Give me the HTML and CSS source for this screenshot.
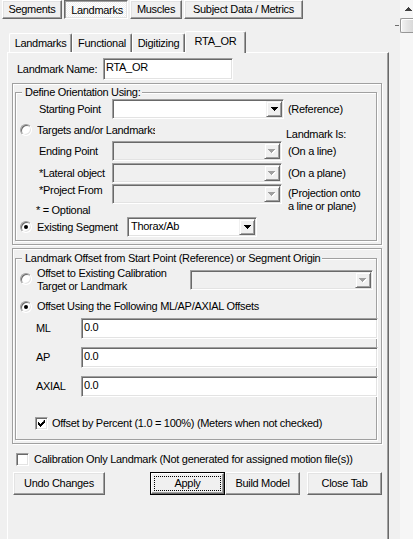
FILE: index.html
```html
<!DOCTYPE html>
<html>
<head>
<meta charset="utf-8">
<title>Landmarks</title>
<link rel="stylesheet" href="styles.css">
</head>
<body>
<div class="window">
  <div class="main">
    <div class="toptabs">
      <div class="tbtn w-seg">Segments</div>
      <div class="tbtn pressed w-lm">Landmarks</div>
      <div class="tbtn w-mus">Muscles</div>
      <div class="tbtn w-subj">Subject Data / Metrics</div>
    </div>
    <div class="subtabs">
      <div class="tab t1">Landmarks</div>
      <div class="tab t2">Functional</div>
      <div class="tab t3">Digitizing</div>
      <div class="tab sel t4">RTA_OR</div>
    </div>
    <div class="panel">
      <div class="namerow">
        <span class="namelbl">Landmark Name:</span>
        <div class="edit namebox">RTA_OR</div>
      </div>

      <div class="frame f1">
        <div class="group g1">
          <div class="legend">Define Orientation Using:</div>
          <div class="row r-lbl r-start">
            <span class="lbl">Starting Point</span>
            <div class="combo w172"><div class="field"></div><div class="dbtn"><svg width="7" height="4" viewBox="0 0 7 4"><path d="M0 0h7v1h-1v1h-1v1h-1v1h-1v-1h-1v-1h-1v-1h-1z" fill="#000"/></svg></div></div>
            <span class="note n4">(Reference)</span>
          </div>
          <div class="row r-targets">
            <div class="radio"></div>
            <span class="rtext clip">Targets and/or Landmarks</span>
            <span class="landis">Landmark Is:</span>
          </div>
          <div class="row r-lbl r-end">
            <span class="lbl">Ending Point</span>
            <div class="combo dis w170"><div class="field"></div><div class="dbtn"><svg width="8" height="5" viewBox="0 0 8 5"><path d="M1 1h7v1h-1v1h-1v1h-1v1h-1v-1h-1v-1h-1v-1h-1z" fill="#fff"/><path d="M0 0h7v1h-1v1h-1v1h-1v1h-1v-1h-1v-1h-1v-1h-1z" fill="#a0a0a0"/></svg></div></div>
            <span class="note n6">(On a line)</span>
          </div>
          <div class="row r-lbl r-lat">
            <span class="lbl">*Lateral object</span>
            <div class="combo dis w170"><div class="field"></div><div class="dbtn"><svg width="8" height="5" viewBox="0 0 8 5"><path d="M1 1h7v1h-1v1h-1v1h-1v1h-1v-1h-1v-1h-1v-1h-1z" fill="#fff"/><path d="M0 0h7v1h-1v1h-1v1h-1v1h-1v-1h-1v-1h-1v-1h-1z" fill="#a0a0a0"/></svg></div></div>
            <span class="note n6">(On a plane)</span>
          </div>
          <div class="row r-lbl r-proj">
            <span class="lbl">*Project From</span>
            <div class="combo dis w170"><div class="field"></div><div class="dbtn"><svg width="8" height="5" viewBox="0 0 8 5"><path d="M1 1h7v1h-1v1h-1v1h-1v1h-1v-1h-1v-1h-1v-1h-1z" fill="#fff"/><path d="M0 0h7v1h-1v1h-1v1h-1v1h-1v-1h-1v-1h-1v-1h-1z" fill="#a0a0a0"/></svg></div></div>
            <span class="note n6 twoline">(Projection onto<br>a line or plane)</span>
          </div>
          <div class="row r-opt">* = Optional</div>
          <div class="row r-seg">
            <div class="radio on"></div>
            <span class="rtext segtext">Existing Segment</span>
            <div class="combo w130"><div class="field">Thorax/Ab</div><div class="dbtn"><svg width="7" height="4" viewBox="0 0 7 4"><path d="M0 0h7v1h-1v1h-1v1h-1v1h-1v-1h-1v-1h-1v-1h-1z" fill="#000"/></svg></div></div>
          </div>
        </div>
      </div>

      <div class="frame f2">
        <div class="group g2">
          <div class="legend">Landmark Offset from Start Point (Reference) or Segment Origin</div>
          <div class="row r-cal">
            <div class="radio"></div>
            <span class="rtext caltext">Offset to Existing Calibration<br>Target or Landmark</span>
            <div class="combo dis w183"><div class="field"></div><div class="dbtn"><svg width="8" height="5" viewBox="0 0 8 5"><path d="M1 1h7v1h-1v1h-1v1h-1v1h-1v-1h-1v-1h-1v-1h-1z" fill="#fff"/><path d="M0 0h7v1h-1v1h-1v1h-1v1h-1v-1h-1v-1h-1v-1h-1z" fill="#a0a0a0"/></svg></div></div>
          </div>
          <div class="row r-use">
            <div class="radio on"></div>
            <span class="rtext">Offset Using the Following ML/AP/AXIAL Offsets</span>
          </div>
          <div class="row r-off r-ml">
            <span class="olbl">ML</span>
            <div class="edit oedit">0.0</div>
          </div>
          <div class="row r-off r-ap">
            <span class="olbl">AP</span>
            <div class="edit oedit">0.0</div>
          </div>
          <div class="row r-off r-ax">
            <span class="olbl">AXIAL</span>
            <div class="edit oedit">0.0</div>
          </div>
          <div class="row r-pct">
            <div class="check"><svg width="7" height="7" viewBox="0 0 7 7"><path d="M6 0h1v3h-1v1h-1v1h-1v1h-1v1h-1v-1h-1v-1h-1v-3h1v1h1v1h1v-1h1v-1h1z" fill="#000"/></svg></div>
            <span class="ctext">Offset by Percent (1.0 = 100%) (Meters when not checked)</span>
          </div>
        </div>
      </div>

      <div class="row r-calib">
        <div class="check"></div>
        <span class="ctext c5">Calibration Only Landmark (Not generated for assigned motion file(s))</span>
      </div>

      <div class="btns">
        <div class="btn b-undo">Undo Changes</div>
        <div class="btn def b-apply"><div class="face"><div class="focus">Apply</div></div></div>
        <div class="btn b-build">Build Model</div>
        <div class="btn b-close">Close Tab</div>
      </div>
    </div>
  </div>
  <div class="mark"><i></i></div>
  <div class="scroll">
    <div class="sb-up"><svg width="7" height="4" viewBox="0 0 7 4"><path d="M3 0h1v1h1v1h1v1h1v1h-7v-1h1v-1h1v-1h1z" fill="#404040"/></svg></div>
    <div class="thumb"></div>
  </div>
</div>
</body>
</html>
```
FILE: styles.css
```css
* { box-sizing: border-box; }
html, body { margin: 0; padding: 0; }
body {
  background: #f0f0f0;
  font-family: "Liberation Sans", Arial, sans-serif;
  font-size: 11px;
  line-height: 13px;
  letter-spacing: -0.3px;
  color: #000;
  width: 413px;
  height: 539px;
  overflow: hidden;
}
.window { display: flex; height: 539px; }
.main { width: 395px; flex: none; }
.mark { width: 5px; flex: none; padding-top: 25px; }
.mark i { display: block; width: 4px; height: 1px; background: #6d6d6d; }
.scroll { width: 13px; flex: none; background: #f6f6f6; }
.sb-up { height: 18px; display: flex; padding: 7px 0 0 5px; }
.sb-up svg { display: block; }
.thumb {
  height: 15px; width: 14px;
  border: 1px solid #979797; border-right: none;
  border-radius: 2px 0 0 2px;
  background: linear-gradient(to right, #f3f3f3, #e4e4e4 50%, #d8d8d8);
  box-shadow: inset 1px 1px 0 #fff;
}

/* top tab buttons */
.toptabs { display: flex; gap: 2px; padding-left: 2px; height: 19px; }
.tbtn {
  height: 19px; display: flex; align-items: center; justify-content: center;
  border: 1px solid; border-color: #fff #696969 #696969 #fff;
  box-shadow: inset -1px -1px 0 #a0a0a0, inset 1px 1px 0 #e3e3e3;
  white-space: nowrap;
}
.tbtn.pressed {
  border-color: #696969 #fff #fff #696969;
  box-shadow: inset 1px 1px 0 #a0a0a0, inset -1px -1px 0 #e3e3e3;
  background: repeating-conic-gradient(#fff 0 25%, #f0f0f0 0 50%) 0 0 / 2px 2px;
  padding: 2px 0 0 2px;
}
.w-seg { width: 60px; }
.w-lm { width: 64px; }
.w-mus { width: 52px; }
.w-subj { width: 119px; }

/* sub tabs */
.subtabs {
  display: flex; align-items: flex-end; height: 21px; margin-top: 12px;
  padding-left: 9px; position: relative; z-index: 1;
}
.tab {
  height: 19px; display: flex; align-items: center; justify-content: center;
  border-top: 1px solid #fff; border-left: 1px solid #fff; border-right: 1px solid #696969;
  box-shadow: inset -1px 0 0 #a0a0a0;
  border-radius: 2px 2px 0 0;
  white-space: nowrap;
}
.tab.sel { height: 22px; margin-bottom: -1px; background: #f0f0f0; padding-bottom: 2px; }
.t1 { width: 63px; }
.t2 { width: 60px; }
.t3 { width: 53px; }
.t4 { width: 61px; }

/* main panel */
.panel {
  margin-left: 7px; width: 382px; height: 490px;
  border-left: 1px solid #fff; border-top: 1px solid #fff; border-right: 1px solid #696969;
  box-shadow: inset -1px 0 0 #a0a0a0;
}
.namerow { display: flex; align-items: center; height: 22px; margin-top: 5px; padding-left: 9px; }
.namelbl { width: 86px; }
.edit {
  background: #fff;
  border: 1px solid; border-color: #a0a0a0 #fff #fff #a0a0a0;
  box-shadow: inset 1px 1px 0 #696969, inset -1px -1px 0 #e3e3e3;
  padding: 2px 2px;
  white-space: nowrap;
}
.namebox { width: 130px; height: 22px; }

/* frames and groups */
.frame {
  margin: 3px 0 0 4px; width: 370px;
  border: 1px solid #a0a0a0;
  box-shadow: inset 1px 1px 0 #fff, 1px 1px 0 #fff;
}
.f1 { height: 162px; }
.f2 { height: 196px; }
.group {
  margin: 8px 0 0 2px; width: 362px;
  border: 1px solid #a0a0a0;
  box-shadow: inset 1px 1px 0 #fff, 1px 1px 0 #fff;
}
.g1 { height: 149px; }
.g2 { height: 182px; margin-top: 9px; }
.legend {
  display: table; margin: -7px 0 0 6px; padding: 0 2px 0 3px;
  background: #f0f0f0; white-space: nowrap;
}

.row { display: flex; align-items: center; white-space: nowrap; }
.r-lbl { height: 20px; padding-left: 23px; }
.lbl { width: 73px; flex: none; }
.note { flex: none; }
.n4 { margin-left: 4px; }
.n6 { margin-left: 6px; }
.r-targets { height: 19px; margin-top: 2px; padding-left: 4px; align-items: flex-start; }
.r-targets .radio { margin-top: 3px; }
.rtext { margin-left: 5px; flex: none; }
.clip { width: 118px; overflow: hidden; margin-top: 3px; }
.landis { margin-left: 131px; margin-top: 7px; }
.r-end { margin-top: 1px; }
.r-lat { margin-top: 2px; }
.r-proj { margin-top: 1px; align-items: flex-start; }
.twoline { margin-top: 3px; }
.r-opt { height: 13px; padding-left: 20px; }
.r-seg { height: 20px; padding-left: 4px; }
.segtext { width: 90px; }

/* combos */
.combo {
  display: flex; height: 20px; flex: none;
  border: 1px solid; border-color: #a0a0a0 #fff #fff #a0a0a0;
  box-shadow: inset 1px 1px 0 #696969, inset -1px -1px 0 #e3e3e3;
  background: #fff; padding: 1px;
}
.combo.dis { background: #f0f0f0; }
.combo .field { flex: 1; padding: 1px 0 0 2px; overflow: hidden; }
.dbtn {
  width: 16px; flex: none; display: flex; align-items: center; justify-content: center;
  background: #f0f0f0;
  border: 1px solid; border-color: #f0f0f0 #696969 #696969 #f0f0f0;
  box-shadow: inset 1px 1px 0 #fff, inset -1px -1px 0 #a0a0a0;
}
.dbtn svg { display: block; }
.w172 { width: 172px; }
.w170 { width: 170px; }
.w130 { width: 130px; }
.w183 { width: 183px; }

/* group 2 */
.r-cal { height: 26px; margin-top: 2px; padding-left: 4px; align-items: flex-start; }
.r-cal .radio { margin-top: 6px; }
.caltext { width: 153px; }
.r-cal .combo { margin-top: 3px; }
.r-use { height: 13px; margin-top: 7px; padding-left: 4px; }
.r-off { height: 21px; padding-left: 20px; }
.r-ml { margin-top: 5px; }
.r-ap, .r-ax { margin-top: 8px; }
.olbl { width: 45px; flex: none; }
.oedit { width: 297px; height: 21px; flex: none; }
.r-pct { height: 13px; margin-top: 20px; padding-left: 19px; }
.ctext { margin-left: 4px; }
.c5 { margin-left: 5px; }
.r-calib { height: 13px; margin-top: 9px; padding-left: 8px; }

/* radio and check */
.radio {
  width: 12px; height: 12px; flex: none; border-radius: 50%;
  background: #fff;
  border: 1px solid; border-color: #a0a0a0 #fff #fff #a0a0a0;
  box-shadow: inset 1px 1px 0 #696969, inset -1px -1px 0 #e3e3e3;
  display: flex; align-items: center; justify-content: center;
}
.radio.on::after { content: ""; width: 4px; height: 4px; border-radius: 50%; background: #000; }
.check {
  width: 13px; height: 13px; flex: none; background: #fff;
  border: 1px solid; border-color: #a0a0a0 #fff #fff #a0a0a0;
  box-shadow: inset 1px 1px 0 #696969, inset -1px -1px 0 #e3e3e3;
}
.check svg { display: block; margin: 2px 0 0 2px; }

/* buttons */
.btns { display: flex; height: 23px; margin-top: 6px; padding-left: 5px; }
.btn {
  height: 23px; flex: none; display: flex; align-items: center; justify-content: center;
  border: 1px solid; border-color: #fff #696969 #696969 #fff;
  box-shadow: inset -1px -1px 0 #a0a0a0, inset 1px 1px 0 #e3e3e3;
  white-space: nowrap;
}
.btn.def { border: 1px solid #000; box-shadow: none; align-items: stretch; }
.btn.def .face {
  flex: 1; display: flex; padding: 2px;
  border: 1px solid; border-color: #fff #696969 #696969 #fff;
  box-shadow: inset -1px -1px 0 #a0a0a0;
}
.btn.def .focus {
  flex: 1; border: 1px dotted #000;
  display: flex; align-items: center; justify-content: center;
}
.b-undo { width: 92px; }
.b-apply { width: 75px; margin-left: 45px; }
.b-build { width: 75px; }
.b-close { width: 75px; margin-left: 7px; }
```
